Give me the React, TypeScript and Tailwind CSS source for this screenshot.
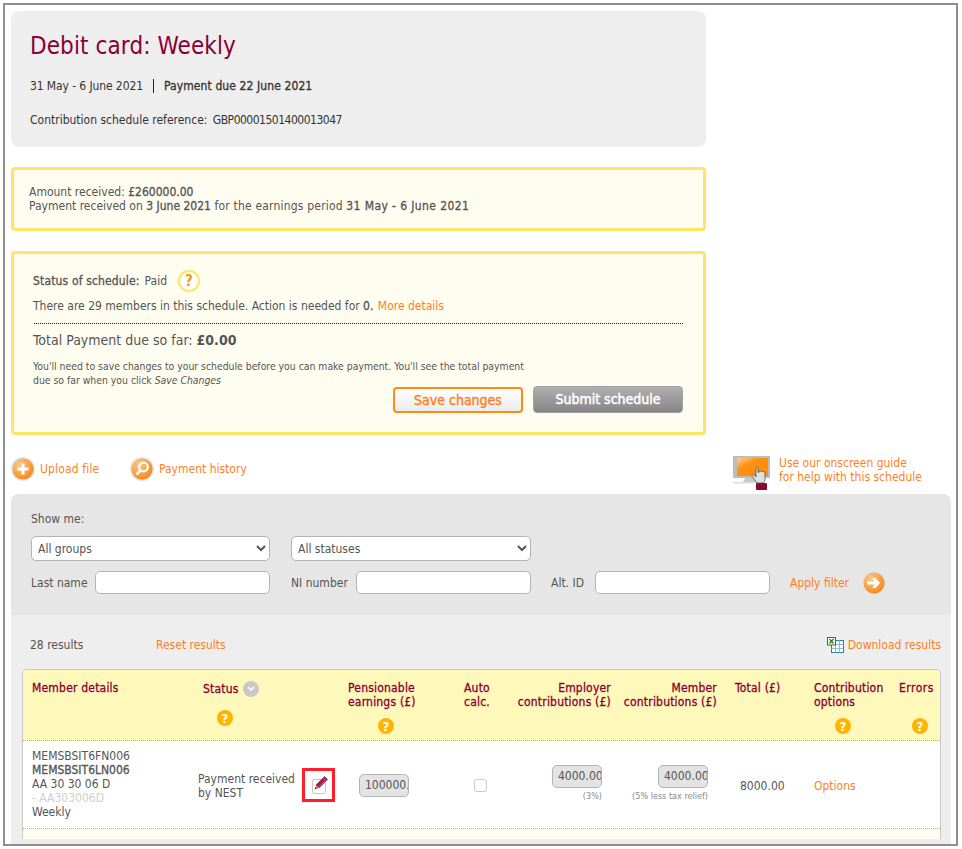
import React from 'react';

const orange = 'text-[#ff7f27]';
const semi = '[-webkit-text-stroke:0.3px]';

const HelpRing = () => (
  <span className="w-[22px] h-[22px] rounded-full border-2 border-[#ffe566] bg-white flex items-center justify-center text-[15px] font-bold text-[#f79a12]">?</span>
);

const HelpDot = () => (
  <span className="w-4 h-4 rounded-full bg-[#ffb400] flex items-center justify-center text-[13px] font-bold text-white leading-none">?</span>
);

const OrangeBall = ({ children }: { children: React.ReactNode }) => (
  <svg width="24" height="24" viewBox="0 0 24 24" className="shrink-0">
    <defs>
      <radialGradient id="ball" cx="0.35" cy="0.3" r="0.8">
        <stop offset="0" stopColor="#fdc98c" />
        <stop offset="1" stopColor="#f5830f" />
      </radialGradient>
    </defs>
    <circle cx="12" cy="12" r="12" fill="#e2e2e2" />
    <circle cx="12" cy="12" r="10.500" fill="url(#ball)" />
    {children}
  </svg>
);

const Monitor = () => (
  <svg width="40" height="36" viewBox="0 0 40 36" className="shrink-0">
    <defs>
      <linearGradient id="screen" x1="0" y1="0" x2="1" y2="1">
        <stop offset="0" stopColor="#ffd3a0" />
        <stop offset="0.35" stopColor="#ff9214" />
        <stop offset="1" stopColor="#ff8c00" />
      </linearGradient>
    </defs>
    <rect x="0" y="1" width="37" height="22" fill="#bdbdbd" />
    <rect x="4" y="3" width="31" height="18" fill="url(#screen)" />
    <path d="M12 23h12l2 4H10z" fill="#c9c9c9" />
    <path d="M0 27h28v1.500H0z" fill="#dcdcdc" />
    <rect x="23" y="28" width="11" height="7" rx="1" fill="#8b0a2c" />
    <path d="M23 14v-1.500c0-1 2-1 2 0V17l1 .5v-1c1-.8 2-.5 2 0 1-.6 2-.3 2 .4 1-.3 2 0 2 .8V24c0 2-1 4-2 4h-6c-1-1-4-5-5-7-.5-1.500 1-2 2-1l2 2z" fill="#e0e0e0" stroke="#555" strokeWidth="0.800" />
  </svg>
);

const ExcelIcon = () => (
  <svg width="17" height="16" viewBox="0 0 17 16" className="shrink-0">
    <rect x="4.500" y="3.500" width="12" height="12" fill="#fff" stroke="#2a7fa8" />
    <path d="M4.500 7.500h12M4.500 11.500h12M8.500 3.500v12M12.500 3.500v12" stroke="#8fbcd4" />
    <rect x="0.500" y="0.500" width="8" height="7.500" fill="#fff" stroke="#2f7d12" />
    <path d="M2.500 2l4 4.500M6.500 2l-4 4.500" stroke="#2f7d12" strokeWidth="1.300" />
  </svg>
);

const Pencil = () => (
  <span className="w-[14px] h-[15px] mt-[3px] border border-[#c8c8c8] rounded-[2px] bg-white relative">
    <svg width="16" height="16" viewBox="0 0 16 16" className="absolute top-[-5px] right-[-4px]">
      <path d="M11.500 1.500l3 3-8.500 8.500-3-3z" fill="#b3174f" stroke="#5a0c28" strokeWidth="0.500" />
      <path d="M10.500 3.500l2 2-7 7" fill="none" stroke="#e0658f" strokeWidth="0.800" />
      <path d="M3 10l3 3-4.500 1.500z" fill="#c08a3a" />
      <path d="M2.400 12.500l1 1-1.900.9z" fill="#222" />
    </svg>
  </span>
);

const ReadOnlyBox = ({ value }: { value: string }) => (
  <div className="w-[50px] h-[23px] rounded-[5px] border border-[#b4b4b4] bg-[#e3e3e3] overflow-hidden pl-[5px] text-[12px] leading-[21px] whitespace-nowrap">
    {value}
  </div>
);

const headerCls = `text-[12px] leading-[14px] text-[#8a0033] tracking-[0.2px] ${semi}`;

export default function App() {
  return (
    <div className="w-[962px] h-[849px] bg-white overflow-hidden pt-[3px] pl-[3px] font-['DejaVu_Sans_Condensed','DejaVu_Sans',sans-serif] text-[12px] text-[#555]">
      <div className="w-[955px] h-[843px] border-2 border-[#8f8f8f] overflow-hidden pl-[6px] pt-[6px] flex flex-col">
        {/* Heading card */}
        <section className="w-[695px] h-[136px] shrink-0 rounded-lg bg-[#eeeeee] pl-[19px] pt-[21px] text-[#333]">
          <h1 className="text-[24px] leading-[28px] text-[#8a0033] tracking-[0.1px]">Debit card: Weekly</h1>
          <div className="mt-[19px] flex items-center h-[14px] leading-[14px]">
            <span className="tracking-[-0.1px]">31 May - 6 June 2021</span>
            <span className="mx-[10px] w-px h-[14px] bg-[#222]" />
            <span className={`${semi} tracking-[0.1px]`}>Payment due 22 June 2021</span>
          </div>
          <p className="mt-[20px] leading-[14px]">
            Contribution schedule reference: <span className="ml-[2px] tracking-[-0.5px]">GBP00001501400013047</span>
          </p>
        </section>

        {/* Received */}
        <section className="w-[695px] h-[64px] shrink-0 mt-[20px] rounded-[4px] border-[3px] border-[#ffe566] bg-[#fffdf0] pl-[15px] pt-[15px] leading-[14px]">
          <p>Amount received: <span className={semi}>£260000.00</span></p>
          <p>
            Payment received on <span className={semi}>3 June 2021</span>{' '}
            <span className="tracking-[0.2px]">for the earnings period</span>{' '}
            <span className={`${semi} tracking-[0.4px]`}>31 May - 6 June 2021</span>
          </p>
        </section>

        {/* Schedule status */}
        <section className="w-[695px] h-[184px] shrink-0 mt-[20px] rounded-[4px] border-[3px] border-[#ffe566] bg-[#fffdf0] pl-[19px] pr-[20px] pt-[15px]">
          <div className="flex items-center h-[24px]">
            <span className={`${semi} tracking-[0.15px]`}>Status of schedule:</span>
            <span className="ml-[5px]">Paid</span>
            <span className="ml-[11px]"><HelpRing /></span>
          </div>
          <p className="mt-[3px] leading-[20px]">
            There are 29 members in this schedule. Action is needed for <span className={semi}>0.</span>{' '}
            <span className={`${orange} ml-[1px]`}>More details</span>
          </p>
          <div className="mt-[7px] ml-[1px] border-t border-dotted border-[#222]" />
          <p className="mt-[7px] text-[14px] leading-[18px]">Total Payment due so far: <span className="font-bold">£0.00</span></p>
          <p className="mt-[10px] text-[10.350px] leading-[14px] w-[500px]">
            You'll need to save changes to your schedule before you can make payment. You'll see the total payment due so far when you click <em>Save Changes</em>
          </p>
          <div className="flex justify-end gap-[10px] items-end -mt-[1px]">
            <button className="w-[130px] h-[26px] rounded-[4px] border-2 border-[#ff8a14] bg-gradient-to-b from-white to-[#ececec] text-[14px] text-[#ff7f27] [-webkit-text-stroke:0.4px]">Save changes</button>
            <button className="w-[150px] h-[27px] rounded-[4px] border border-[#a0a0a0] bg-gradient-to-b from-[#b0b0b0] to-[#868686] text-[14px] text-white [-webkit-text-stroke:0.5px]">Submit schedule</button>
          </div>
        </section>

        {/* Links row */}
        <div className="w-[940px] h-[59px] shrink-0 flex">
          <div className={`flex items-center h-[24px] mt-[22px] ${orange}`}>
            <OrangeBall><path d="M10.500 6.500h3v4h4v3h-4v4h-3v-4h-4v-3h4z" fill="#fff" /></OrangeBall>
            <span className="ml-[5px] w-[60px] tracking-[0.15px]">Upload file</span>
            <span className="ml-[30px]">
              <OrangeBall>
                <circle cx="13.500" cy="10" r="4.300" fill="none" stroke="#fff" strokeWidth="2.200" />
                <path d="M10.500 13.500l-4 4" stroke="#fff" strokeWidth="2.500" />
              </OrangeBall>
            </span>
            <span className="ml-[5px]">Payment history</span>
          </div>
          <div className={`flex ml-auto w-[218px] mt-[20px] ${orange}`}>
            <Monitor />
            <p className="ml-[6px] mt-[1px] leading-[14px]">Use our onscreen guide<br />for help with this schedule</p>
          </div>
        </div>

        {/* Filters and results */}
        <section className="w-[940px] shrink-0 rounded-t-lg bg-[#eeeeee] pb-[6px] grow">
          <div className="h-[121px] rounded-t-lg bg-[#e6e6e6] pl-[20px] pt-[18px]">
            <p className="leading-[14px]">Show me:</p>
            <div className="flex gap-[21px] mt-[10px]">
              <select defaultValue="" className="w-[239px] h-[25px] rounded-[5px] border border-[#b4b4b4] bg-white pl-[2px] text-[12px]">
                <option value="">All groups</option>
              </select>
              <select defaultValue="" className="w-[240px] h-[25px] rounded-[5px] border border-[#b4b4b4] bg-white pl-[2px] text-[12px]">
                <option value="">All statuses</option>
              </select>
            </div>
            <div className="flex items-center mt-[10px] h-[23px]">
              <label className="w-[64px]">Last name</label>
              <input className="w-[175px] h-[23px] rounded-[5px] border border-[#b4b4b4] bg-white" />
              <label className="w-[65px] ml-[21px]">NI number</label>
              <input className="w-[175px] h-[23px] rounded-[5px] border border-[#b4b4b4] bg-white" />
              <label className="w-[44px] ml-[20px]">Alt. ID</label>
              <input className="w-[175px] h-[23px] rounded-[5px] border border-[#b4b4b4] bg-white" />
              <span className={`ml-[20px] w-[61px] ${orange}`}>Apply filter</span>
              <span className="ml-[11px]">
                <OrangeBall><path d="M5 10.500h7.500l-2.500-3.500h3.500l4.500 5-4.500 5H10l2.500-3.500H5z" fill="#fff" /></OrangeBall>
              </span>
            </div>
          </div>

          <div className="flex items-center h-[54px] pt-[6px] pl-[19px] pr-[10px]">
            <span className="w-[126px]">28 results</span>
            <span className={orange}>Reset results</span>
            <span className={`ml-auto flex items-center gap-[4px] ${orange}`}>
              <ExcelIcon />
              Download results
            </span>
          </div>

          {/* Table */}
          <div className="ml-[11px] w-[919px] h-[170px] rounded-t-[5px] border border-[#c8c8c8] border-b-0 bg-white overflow-hidden">
            <div className="grid grid-cols-[167px_150px_115px_55px_108px_108px_80px_86px_48px] h-[71px] bg-[#fff8bb] border-b border-dotted border-[#aaa]">
              <div className={`${headerCls} pl-[9px] pt-[11px]`}>Member details</div>
              <div className="pt-[11px] flex flex-col items-start pl-[13px]">
                <span className={`${headerCls} flex items-center gap-[4px]`}>
                  Status
                  <span className="w-4 h-4 rounded-full bg-[#c8c8c8] flex items-center justify-center">
                    <svg width="8" height="6" viewBox="0 0 8 6"><path d="M1 1l3 3 3-3" fill="none" stroke="#fff" strokeWidth="1.500" /></svg>
                  </span>
                </span>
                <span className="mt-[13px] ml-[14px]"><HelpDot /></span>
              </div>
              <div className="pl-[8px] pt-[11px]">
                <p className={headerCls}>Pensionable<br />earnings (£)</p>
                <span className="block mt-[9px] ml-[30px]"><HelpDot /></span>
              </div>
              <div className={`${headerCls} pl-[9px] pt-[11px]`}>Auto<br />calc.</div>
              <div className={`${headerCls} pt-[11px] text-right pr-[7px] whitespace-nowrap`}>Employer<br />contributions (£)</div>
              <div className={`${headerCls} pt-[11px] text-right pr-[9px] whitespace-nowrap`}>Member<br />contributions (£)</div>
              <div className={`${headerCls} pl-[9px] pt-[11px]`}>Total (£)</div>
              <div className="pl-[8px] pt-[11px]">
                <p className={headerCls}>Contribution<br />options</p>
                <span className="block mt-[9px] ml-[21px]"><HelpDot /></span>
              </div>
              <div className="pl-[7px] pt-[11px]">
                <p className={`${headerCls} tracking-[0.5px]`}>Errors</p>
                <span className="block mt-[23px] ml-[13px]"><HelpDot /></span>
              </div>
            </div>

            <div className="grid grid-cols-[167px_150px_115px_55px_108px_108px_80px_86px_48px] h-[88px] border-b border-dotted border-[#aaa] items-center">
              <div className="pl-[9px] leading-[14px] mb-[2px]">
                <p>MEMSBSIT6FN006</p>
                <p className={semi}>MEMSBSIT6LN006</p>
                <p>AA 30 30 06 D</p>
                <p className="text-[#cfcfcf]">- AA303006D</p>
                <p>Weekly</p>
              </div>
              <div className="flex items-center pl-[8px]">
                <p className="leading-[14px] w-[105px] mt-[2px]">Payment received by NEST</p>
                <span className="ml-[-1px] w-[33px] h-[34px] border-[3px] border-[#ff1f2b] flex items-center justify-center"><Pencil /></span>
              </div>
              <div className="pl-[19px] mt-[2px]"><ReadOnlyBox value="100000." /></div>
              <div className="pl-[19px] mt-[2px]">
                <input type="checkbox" disabled className="block appearance-none w-[13px] h-[13px] rounded-[3px] border border-[#c8c8c8] bg-white" />
              </div>
              <div className="flex flex-col items-end pr-[16px] -mt-[2px]">
                <ReadOnlyBox value="4000.00" />
                <span className="text-[9px] leading-[12px] mt-[2px] text-[#888]">(3%)</span>
              </div>
              <div className="flex flex-col items-end pr-[18px] -mt-[2px]">
                <ReadOnlyBox value="4000.00" />
                <span className="text-[9px] leading-[12px] mt-[2px] text-[#888] whitespace-nowrap">(5% less tax relief)</span>
              </div>
              <div className="pl-[14px] mt-[2px]">8000.00</div>
              <div className={`pl-[8px] mt-[2px] ${orange}`}>Options</div>
              <div />
            </div>
            <div className="h-[10px] bg-[#fffdf0]" />
          </div>
        </section>
      </div>
    </div>
  );
}
